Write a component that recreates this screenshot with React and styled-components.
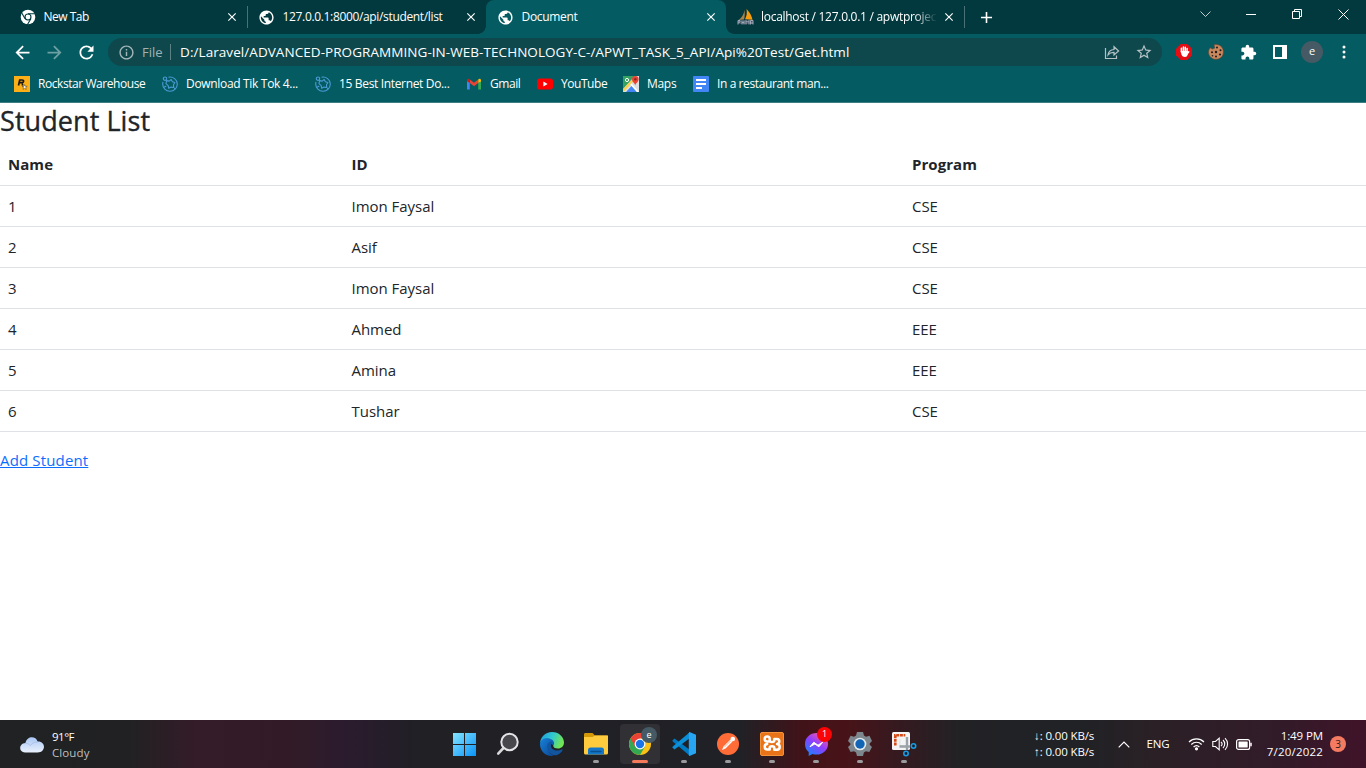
import React from "react";
import styled, { createGlobalStyle, css } from "styled-components";
import { MdPublic, MdExtension, MdRefresh, MdStarBorder, MdArrowBack, MdArrowForward, MdInfoOutline, MdClose, MdAdd } from "react-icons/md";

const Global = createGlobalStyle`
  * { box-sizing: border-box; }
  html, body, #root { height: 100%; }
  body { margin: 0; overflow: hidden; background: #fff; font-family: "Open Sans", "Noto Sans", sans-serif; }
  svg { display: block; flex: none; }
`;

const Screen = styled.div`
  width: 1366px;
  height: 768px;
  display: flex;
  flex-direction: column;
`;

const Label = styled.span`
  font-size: ${(p) => p.$size || 12}px;
  letter-spacing: ${(p) => p.$track || 0}px;
  color: ${(p) => p.$color || "#fff"};
  line-height: 16px;
  white-space: nowrap;
`;

/* Browser frame */
const TabStrip = styled.div`
  height: 34px;
  flex: none;
  display: flex;
  background: #02393e;
`;

const Tab = styled.div`
  width: ${(p) => p.$width}px;
  padding: 0 8.5px 0 ${(p) => p.$pad}px;
  display: flex;
  align-items: center;
  position: relative;
  color: #fff;
  ${(p) =>
    p.$active &&
    css`
      background: #045b61;
      border-radius: 8px 8px 0 0;
      &::before, &::after {
        content: "";
        position: absolute;
        bottom: 0;
        width: 8px;
        height: 8px;
      }
      &::before { left: -8px; background: radial-gradient(circle at 0 0, #02393e 7.5px, #045b61 8px); }
      &::after { right: -8px; background: radial-gradient(circle at 100% 0, #02393e 7.5px, #045b61 8px); }
    `}
  ${(p) =>
    p.$divider &&
    css`
      border-right: 1px solid transparent;
      border-image: linear-gradient(transparent 7px, #4a7276 7px, #4a7276 27px, transparent 27px) 1;
      border-width: 0 1px 0 0;
    `}
`;

const TabTitle = styled(Label)`
  flex: 1;
  min-width: 0;
  overflow: hidden;
  margin: 0 5px 0 7.5px;
  ${(p) => p.$fade && "mask-image: linear-gradient(to right, #000 87%, transparent);"}
`;

const NewTab = styled.div`
  width: 43px;
  display: grid;
  place-items: center;
  color: #fff;
`;

const WindowControls = styled.div`
  margin-left: auto;
  display: flex;
  height: 28px;
`;

const WindowButton = styled.div`
  width: 46px;
  display: grid;
  place-items: center;
`;

const Toolbar = styled.div`
  height: 36px;
  flex: none;
  display: flex;
  align-items: center;
  background: #045b61;
`;

const ToolButton = styled.div`
  width: 32px;
  display: grid;
  place-items: center;
  color: #fff;
  opacity: ${(p) => (p.$dim ? 0.42 : 1)};
`;

const NavGroup = styled.div`
  display: flex;
  padding-left: 6px;
  width: 108px;
`;

const AddressBar = styled.div`
  width: 1054px;
  height: 28px;
  border-radius: 14px;
  background: #0e484d;
  display: flex;
  align-items: center;
  padding: 0 2px 0 9.5px;
`;

const Scheme = styled(Label)`
  margin-left: 7.5px;
`;

const Separator = styled.div`
  width: 1px;
  height: 16px;
  margin: 0 9px 0 7.5px;
  background: #5c8185;
`;

const AddressActions = styled.div`
  margin-left: auto;
  display: flex;
`;

const Extensions = styled.div`
  display: flex;
  align-items: center;
  padding-left: 6px;
`;

const Avatar = styled.div`
  width: 22px;
  height: 22px;
  border-radius: 50%;
  background: #455a64;
  color: #fff;
  font-size: 11px;
  line-height: 20px;
  text-align: center;
`;

const Bookmarks = styled.div`
  height: 33px;
  flex: none;
  display: flex;
  padding: 0 0 5px 14px;
  background: #045b61;
  border-bottom: 1px solid #3b7f84;
`;

const Bookmark = styled.div`
  width: ${(p) => p.$width}px;
  display: flex;
  align-items: center;
  gap: 8px;
`;

/* Page */
const Page = styled.main`
  flex: 1;
  background: #fff;
  color: #212529;
`;

const Heading = styled.h1`
  margin: 0 0 6px;
  padding-top: 1px;
  font-size: 27px;
  font-weight: 500;
  line-height: 34px;
  letter-spacing: 0.07px;
  -webkit-text-stroke: 0.35px #212529;
`;

const Table = styled.table`
  width: 100%;
  table-layout: fixed;
  border-collapse: collapse;
  margin-bottom: 16px;
`;

const Cell = styled.td`
  width: ${(p) => p.$width || "auto"};
  height: 41px;
  padding: 0 8px;
  text-align: left;
  border-bottom: 1px solid #dee2e6;
  font-size: 15px;
  font-weight: ${(p) => (p.$head ? 700 : 400)};
  letter-spacing: ${(p) => (p.$head ? 0.05 : -0.03)}px;
  line-height: 24px;
`;

const AddLink = styled.a`
  color: #0d6efd;
  font-size: 15px;
  line-height: 24px;
  letter-spacing: 0.15px;
  text-decoration: underline;
`;

/* Taskbar */
const Taskbar = styled.footer`
  height: 48px;
  flex: none;
  display: flex;
  background: linear-gradient(90deg, #202223 0, #212123 130px, #341c28 195px, #321b27 290px, #2b1b2e 345px, #202025 420px, #202126 740px, #401319 800px, #481318 845px, #341a20 900px, #222225 960px, #202225 1080px, #2b2026 1160px, #321b29 1280px, #401329 1366px);
`;

const Weather = styled.div`
  width: 442px;
  display: flex;
  align-items: center;
  gap: 8px;
  padding: 1px 0 0 20px;
`;

const Stack = styled.div`
  display: flex;
  flex-direction: column;
  align-items: ${(p) => p.$align || "flex-start"};
`;

const Apps = styled.div`
  display: flex;
  align-items: center;
`;

const AppButton = styled.div`
  width: 40px;
  height: 40px;
  margin: 0 2px;
  border-radius: 4px;
  display: grid;
  place-items: center;
  position: relative;
  background: ${(p) => (p.$active ? "#303035" : "none")};
  ${(p) =>
    (p.$running || p.$active) &&
    css`
      &::after {
        content: "";
        position: absolute;
        bottom: 1px;
        left: 50%;
        transform: translateX(-50%);
        width: ${p.$active ? 16 : 6}px;
        height: 3px;
        border-radius: 2px;
        background: ${p.$active ? "#f5795b" : "#9b9a9c"};
      }
    `}
`;

const Badge = styled.span`
  position: absolute;
  top: ${(p) => p.$top}px;
  right: ${(p) => p.$right}px;
  width: ${(p) => p.$size}px;
  height: ${(p) => p.$size}px;
  border-radius: 50%;
  background: ${(p) => p.$bg};
  color: #fff;
  font-size: 9px;
  line-height: ${(p) => p.$size - 1}px;
  text-align: center;
`;

const Tray = styled.div`
  margin-left: auto;
  display: flex;
  align-items: center;
  padding-right: 20px;
`;

const TrayItem = styled.div`
  width: ${(p) => p.$width}px;
  display: flex;
  justify-content: ${(p) => p.$justify || "center"};
`;

const Notice = styled.div`
  width: 16px;
  height: 16px;
  margin-left: 7px;
  border-radius: 50%;
  background: #f47b61;
  color: #241b1d;
  font-size: 10px;
  line-height: 16px;
  text-align: center;
`;

const ChromeMono = () => (
  <svg width="16" height="16" viewBox="0 0 16 16">
    <circle cx="8" cy="8" r="7.3" fill="#fff" />
    <circle cx="8" cy="8" r="3.5" fill="#02393e" />
    <circle cx="8" cy="8" r="2.4" fill="#fff" />
    <path d="M8 4.7h7M5.1 9.700 1.500 3.500M10.900 9.700 7.300 15.800" stroke="#02393e" strokeWidth="1.100" />
  </svg>
);

const PhpMyAdmin = () => (
  <svg width="17" height="16" viewBox="0 0 17 16">
    <path d="M7.2 1C7.200 5 5 8.500 1.500 11L7 10.500C8 7 8 4 7.200 1Z" fill="#a8824f" />
    <path d="M9.500 0c3 3 5.400 7 6 10.800L8 10.200C9.800 7 10.200 4 9.500 0Z" fill="#f89c0e" />
    <path d="M1 11.300h15v3.700H1z" fill="#6c6f80" opacity=".55" />
    <path d="M1 15.500v-4h2v1.700H1M5 11.500v4m0-2h2M7 11.500v4m2 0v-4l1.500 1.700L12 11.500v4m1.500 0v-4H16v4m-2.500-1.500H16" stroke="#a3a6b8" fill="none" />
  </svg>
);

const Share = () => (
  <svg width="18" height="18" viewBox="0 0 18 18" fill="none" stroke="#b4c2c4" strokeWidth="1.2">
    <path d="M2.500 5v10.500h11v-3M5 12c.4-3.400 2.400-5.300 6-5.500V3.700L15.600 8 11 12V9.400C8.400 9.300 6.600 10 5 12Z" />
  </svg>
);

const Adblock = () => (
  <svg width="16" height="16" viewBox="0 0 16 16">
    <path d="M4.7 0h6.6L16 4.7v6.6L11.3 16H4.7L0 11.3V4.7Z" fill="#e40d13" />
    <path d="M5.400 8V4.300M7.400 7V2.900M9.300 7V3.200M11.100 8V4.400" stroke="#fff" strokeWidth="1.500" strokeLinecap="round" />
    <path d="M4.700 7h7.100v2.800c0 2-1.200 3.300-3 3.300-1.600 0-2.500-.7-3.200-2Z" fill="#fff" />
    <path d="m11 10 1.800-2.200" stroke="#fff" strokeWidth="1.400" strokeLinecap="round" />
  </svg>
);

const Cookie = () => (
  <svg width="16" height="16" viewBox="0 0 16 16">
    <path d="M6 .8 6.800 4 4.500 5.100 2 3.800C-.3 7 .1 11 3 13.500c4 3.500 10.500 1.800 12-3C16.900 4.400 12-.7 6 .8Z" fill="#c9875d" stroke="#6b4431" strokeWidth=".6" />
    <g fill="#211c1a"><circle cx="9" cy="3.600" r="1" /><circle cx="12.500" cy="6.200" r="1" /><circle cx="8" cy="8" r="1.200" /><circle cx="4" cy="8.200" r="1" /><circle cx="12" cy="10.500" r="1.100" /><circle cx="8" cy="12.500" r="1" /><circle cx="4.500" cy="11.700" r=".8" /></g>
  </svg>
);

const Rockstar = () => (
  <svg width="16" height="16" viewBox="0 0 16 16">
    <path d="M0 0h16v16H0z" fill="#fcaf17" />
    <path d="M4.500 9.500 5.700 4H8c2.300 0 2 2.600.1 2.600H5.800M8 7c1 .5.200 1.500.6 2.500" fill="none" stroke="#171717" strokeWidth="1.700" />
    <path d="m10.600 8.600.7 1.700 1.900.1-1.500 1.200.5 1.800-1.600-1-1.600 1 .5-1.800-1.500-1.200h1.900Z" fill="#fff" stroke="#3c3014" strokeWidth=".5" />
  </svg>
);

const Freemake = () => (
  <svg width="16" height="16" viewBox="0 0 16 16" fill="none" stroke="#4c9bd4" strokeWidth="1.100">
    <circle cx="3" cy="2.700" r="1.700" />
    <path d="M6.500 1.200C11 .2 15.300 3.600 15.300 8c0 4-3.200 7.300-7.300 7.300S.700 12 .700 8c0-.8.100-1.500.3-2.200" />
    <path d="m4.600 4.600 2.600.5L9.200 3.500l1.200 2.300 2.500.7-1.400 2.200.2 2.800-2.600-.4-2.400 1.200-.5-2.700L4 7.600Z" strokeLinejoin="round" />
    <path d="m1.500 11.500 2.800-1.600M12.300 12l1 1" />
  </svg>
);

const Gmail = () => (
  <svg width="16" height="16" viewBox="0 0 16 16">
    <path d="M1 4v9.500h2.800V6" fill="#4285f4" />
    <path d="M12.200 6v7.500H15V4" fill="#34a853" />
    <path d="M12.200 6.800V3.500c1.200-1.200 2.800-.7 2.800 1v1Z" fill="#fbbc04" />
    <path d="M3.800 3.500 8 6.700l4.200-3.200v3.600L8 10.300 3.800 7.100Z" fill="#ea4335" />
    <path d="M1 4.500c0-1.700 1.600-2.200 2.800-1v3.600L1 5.200Z" fill="#c5221f" />
  </svg>
);

const YouTube = () => (
  <svg width="16" height="16" viewBox="0 0 16 16">
    <rect y="2.400" width="16" height="11.200" rx="2.800" fill="#f00" />
    <path d="m6.400 5.600 4.200 2.400-4.200 2.400Z" fill="#fff" />
  </svg>
);

const Maps = () => (
  <svg width="16" height="16" viewBox="0 0 16 16">
    <path d="M0 0h16v16H0z" fill="#dce0e2" />
    <path d="M0 0h12L0 13Z" fill="#34a261" />
    <path d="m3 16 5.500-6 5.500 6Z" fill="#4285f4" />
    <path d="M0 15 11 3" stroke="#fbd04a" strokeWidth="2.200" />
    <path d="m8 8 7 8" stroke="#fff" strokeWidth="1.500" />
    <circle cx="4" cy="4" r="1.600" fill="none" stroke="#fff" />
    <path d="M12.300 9.500C11.800 7 9 6 9 3.300a3.300 3.300 0 0 1 6.600 0c0 2.700-2.800 3.700-3.300 6.200Z" fill="#ea4335" />
    <circle cx="12.300" cy="3.300" r="1.200" fill="#8c2b24" />
  </svg>
);

const Docs = () => (
  <svg width="16" height="16" viewBox="0 0 16 16">
    <rect width="16" height="16" rx="1" fill="#4285f4" />
    <path d="M3 4h10M3 8h10M3 12h6" stroke="#fff" strokeWidth="1.900" />
  </svg>
);

const Cloud = () => (
  <svg width="24" height="16" viewBox="0 0 24 16">
    <defs><linearGradient id="cloud" x2="0" y2="1"><stop stopColor="#a9c6f5" /><stop offset="1" stopColor="#e9f1fc" /></linearGradient></defs>
    <path d="M5 15.500C-1.500 15.500-1.500 6.500 5.400 6 7-1.500 16-1.500 17.600 4.500c8.500-.5 8.500 11 0 11Z" fill="url(#cloud)" />
    <path d="M5.400 6.500c2.500-.2 4 .8 5 2.200 1.400-2.500 4-3.900 7.200-3.700" fill="none" stroke="#a6bde3" strokeWidth=".8" />
  </svg>
);

const Windows = () => (
  <svg width="23" height="23" viewBox="0 0 23 23">
    <defs><linearGradient id="win" gradientUnits="userSpaceOnUse" x2="23" y2="23"><stop stopColor="#85e3ff" /><stop offset="1" stopColor="#0a93f8" /></linearGradient></defs>
    <path d="M0 0h11v11H0zM12 0h11v11H12zM0 12h11v11H0zM12 12h11v11H12z" fill="url(#win)" />
  </svg>
);

const Search = () => (
  <svg width="24" height="24" viewBox="0 0 24 24">
    <path d="m7.500 16-5.300 5.600" stroke="#d8d8da" strokeWidth="2.600" strokeLinecap="round" />
    <circle cx="13.500" cy="10" r="8.200" fill="#47474c" stroke="#e4e4e6" strokeWidth="2" />
  </svg>
);

const Edge = () => (
  <svg width="24" height="24" viewBox="0 0 24 24">
    <defs>
      <linearGradient id="edgeTop" x2="1" y2=".3"><stop stopColor="#1a9be0" /><stop offset=".55" stopColor="#31c8cf" /><stop offset="1" stopColor="#70e356" /></linearGradient>
      <linearGradient id="edgeLow" x2="1" y2="1"><stop stopColor="#1782d8" /><stop offset="1" stopColor="#0b4596" /></linearGradient>
    </defs>
    <path d="M0 12C0 5 5.200 0 12 0s12 5 12 10.500c0 3.700-2.700 6-6 6-3.200 0-5-1.200-4.700-3C10 5 1 6 0 12Z" fill="url(#edgeTop)" />
    <path d="M0 12C.5 6 8 4.500 12.500 8c2 2 2 3.800.8 5.500-1-2-4-2-5 0-1.500 4 2 9.500 6 10C7 25.500 0 20 0 12Z" fill="url(#edgeLow)" />
    <path d="M11.500 9.300c-4.300 1.200-5.500 5-3.500 9 2.200 4.500 6.500 6 9.500 4.500 2.300-1.200 4-2.600 5-4.600.4-.8-.3-1-.8-.700-4.700 2.200-10.500.5-10.700-3.500-.1-2 .5-2.500 1.500-3.500Z" fill="#12559f" />
  </svg>
);

const Folder = () => (
  <svg width="24" height="24" viewBox="0 0 24 24">
    <path d="M0 2.500C0 1.500.6 1 1.500 1h7L11 3.500h13V12H0Z" fill="#d59908" />
    <path d="M0 5h8.500L11 3.500h12q1 0 1 1V21q0 1.500-1.500 1.500h-21Q0 22.500 0 21Z" fill="#fecb3e" />
    <path d="M4 22.500V18q0-2.500 2.500-2.500h11q2.500 0 2.500 2.500v4.500Z" fill="#1376c8" />
    <path d="M7 19.500h10" stroke="#084f91" strokeWidth="1.400" strokeLinecap="round" />
  </svg>
);

const Chrome = () => (
  <svg width="22" height="22" viewBox="0 0 22 22">
    <circle cx="11" cy="11" r="11" fill="#fbc116" />
    <path d="M1.500 5.500A11 11 0 0 0 11 22l4.800-8.300L11 11Z" fill="#34a853" />
    <path d="M1.500 5.500a11 11 0 0 1 19 0H11v5.500L6.200 13.700Z" fill="#ea4335" />
    <circle cx="11" cy="11" r="5.400" fill="#fff" />
    <circle cx="11" cy="11" r="4.200" fill="#1a73e8" />
  </svg>
);

const VsCode = () => (
  <svg width="24" height="24" viewBox="0 0 24 24">
    <path d="M.6 8.200 2.500 6.500 18 18v6L.8 9.600Q0 8.900.6 8.200Z" fill="#0079c3" />
    <path d="M.6 15.800 2.500 17.500 18 6V0L.8 14.400Q0 15.100.6 15.800Z" fill="#0a8fd8" />
    <path d="m17.500 0 6.500 2.800v18.400L17.500 24q-.7-.4-.7-1.200V1.200q0-.8.700-1.200Z" fill="#28a5f2" />
  </svg>
);

const Postman = () => (
  <svg width="22" height="22" viewBox="0 0 22 22">
    <circle cx="11" cy="11" r="11" fill="#ff6c37" />
    <path d="m5 17 1.500-3.500 7-7L15.500 8.500l-7 7Z" fill="#fff" />
    <circle cx="15.800" cy="6" r="2.300" fill="#fff" />
    <path d="m7.500 14 6.200-6.200" stroke="#ef986f" strokeWidth=".8" />
  </svg>
);

const Xampp = () => (
  <svg width="24" height="24" viewBox="0 0 24 24">
    <rect x=".5" y=".5" width="23" height="23" rx="1.500" fill="#e87318" stroke="#f49239" />
    <path d="M9.500 9.500H7.200A2.500 2.500 0 1 1 9.700 7v1.500q0 1.500 2.300 1.500t2.300-1.500V7H17q2.300 0 2.300 2.300T17 12q2.700.4 2.700 3T17 17.700h-2.700v-2q0-1.500-2.300-1.500t-2.300 1.500v1.800H7.200q-2.500 0-2.500-2.700T7.200 12" fill="none" stroke="#fff" strokeWidth="2.500" strokeLinejoin="round" strokeLinecap="round" />
  </svg>
);

const Messenger = () => (
  <svg width="23" height="23" viewBox="0 0 23 23">
    <defs><linearGradient id="msg" x1=".1" y1="1" x2=".8" y2="0"><stop stopColor="#098cff" /><stop offset=".55" stopColor="#913dff" /><stop offset="1" stopColor="#ff5c94" /></linearGradient></defs>
    <path d="M11.500 0C5 0 0 4.700 0 11c0 3.500 1.400 6.200 3.700 8V23l3.700-2c1.300.4 2.700.6 4.100.6C18 21.600 23 17 23 11S18 0 11.500 0Z" fill="url(#msg)" />
    <path d="m5 13.700 3.800-4.500 4.200 3 4.700-3-3.800 4.600-4-2.800Z" fill="#fff" stroke="#fff" strokeLinejoin="round" />
  </svg>
);

const Gear = () => (
  <svg width="24" height="24" viewBox="0 0 24 24">
    <path d="M9 0h6l1 3.500 2 1.200 3.500-.9L24 9l-2.300 2.400v1.400L24 15l-2.700 5-3.400-.8-2 1.200L15 24H9l-1-3.600-2-1.200-3.400.8L0 15l2.400-2.200v-1.400L0 9l2.600-5.200 3.400.9 2-1.200Z" fill="#7c868c" />
    <circle cx="12" cy="12" r="6.300" fill="#e4e9ec" />
    <circle cx="12" cy="12" r="4.700" fill="#1265b4" />
  </svg>
);

const Snip = () => (
  <svg width="26" height="25" viewBox="0 0 26 25">
    <rect x="1" width="18" height="18" rx="1.500" fill="#f4f4f5" />
    <path d="M4.300 13.500V3.300h10" fill="none" stroke="#d64a18" strokeWidth="2.600" strokeDasharray="3 .7" />
    <path d="M9 7v7h6" stroke="#dfe2e5" strokeWidth="1" fill="none" />
    <path d="M8.500 14.500H19M16 5v13" stroke="#9aa2a8" strokeWidth="2.400" />
    <circle cx="22.500" cy="14" r="2.200" fill="#12202e" stroke="#199be2" strokeWidth="1.600" />
    <circle cx="15" cy="21.500" r="2.200" fill="#12202e" stroke="#199be2" strokeWidth="1.600" />
  </svg>
);

const Wifi = () => (
  <svg width="17" height="14" viewBox="0 0 17 14" fill="none" stroke="#fff" strokeWidth="1.200">
    <path d="M1 5c4.200-4.200 10.800-4.200 15 0M3.300 7.500c3-3 7.400-3 10.400 0M5.600 10c1.700-1.700 4.100-1.700 5.800 0" />
    <circle cx="8.500" cy="11.800" r="1" fill="#fff" />
  </svg>
);

const Volume = () => (
  <svg width="17" height="14" viewBox="0 0 17 14" fill="none" stroke="#fff" strokeWidth="1.100">
    <path d="M.8 4.500h2.700L7.200 1.200v11.600L3.500 9.500H.8ZM9 4.800c1.200 1.200 1.200 3.200 0 4.400M11 3c2.300 2.200 2.300 5.800 0 8M13 1.200c3.400 3.200 3.400 8.400 0 11.600" />
  </svg>
);

const Battery = () => (
  <svg width="16" height="11" viewBox="0 0 16 11">
    <rect x=".6" y=".6" width="13" height="9.800" rx="2" fill="none" stroke="#fff" strokeWidth="1.200" />
    <rect x="2.500" y="2.500" width="9.200" height="6" rx=".5" fill="#fff" />
    <path d="M15 3.800v3.400" stroke="#fff" strokeWidth="1.500" />
  </svg>
);

const tabs = [
  { icon: <ChromeMono />, title: "New Tab", width: 248, pad: 20, divider: true, track: -0.5 },
  { icon: <MdPublic size={17} />, title: "127.0.0.1:8000/api/student/list", width: 238, pad: 10, track: -0.34 },
  { icon: <MdPublic size={17} />, title: "Document", width: 240, pad: 11, active: true, track: -0.32 },
  { icon: <PhpMyAdmin />, title: "localhost / 127.0.0.1 / apwtproject", width: 239, pad: 10.5, divider: true, fade: true, track: -0.28 },
];

const bookmarks = [
  { icon: <Rockstar />, title: "Rockstar Warehouse", width: 148, track: -0.44 },
  { icon: <Freemake />, title: "Download Tik Tok 4...", width: 153, track: -0.32 },
  { icon: <Freemake />, title: "15 Best Internet Do...", width: 151, track: -0.34 },
  { icon: <Gmail />, title: "Gmail", width: 71, track: -0.45 },
  { icon: <YouTube />, title: "YouTube", width: 86, track: -0.45 },
  { icon: <Maps />, title: "Maps", width: 70, track: -0.3 },
  { icon: <Docs />, title: "In a restaurant man...", width: 150, track: -0.4 },
];

const students = [
  ["1", "Imon Faysal", "CSE"],
  ["2", "Asif", "CSE"],
  ["3", "Imon Faysal", "CSE"],
  ["4", "Ahmed", "EEE"],
  ["5", "Amina", "EEE"],
  ["6", "Tushar", "CSE"],
];

const BrowserTabs = () => (
  <TabStrip>
    {tabs.map((t) => (
      <Tab key={t.title} $width={t.width} $pad={t.pad} $active={t.active} $divider={t.divider}>
        {t.icon}
        <TabTitle $track={t.track} $fade={t.fade}>{t.title}</TabTitle>
        <MdClose size={14} />
      </Tab>
    ))}
    <NewTab><MdAdd size={19} /></NewTab>
    <WindowControls>
      <WindowButton><svg width="11" height="7" fill="none" stroke="#c0cecf"><path d="m.5.500 5 5 5-5" /></svg></WindowButton>
      <WindowButton><svg width="10" height="1"><path d="M0 0h10v1H0z" fill="#fff" /></svg></WindowButton>
      <WindowButton><svg width="10" height="10" fill="none" stroke="#fff"><path d="M.5 2.500h7v7h-7zM2.500 2V.5h7v7H8" /></svg></WindowButton>
      <WindowButton><svg width="11" height="11" stroke="#fff"><path d="m.5.500 10 10m0-10-10 10" /></svg></WindowButton>
    </WindowControls>
  </TabStrip>
);

const BrowserToolbar = () => (
  <Toolbar>
    <NavGroup>
      <ToolButton><MdArrowBack size={21} /></ToolButton>
      <ToolButton $dim><MdArrowForward size={21} /></ToolButton>
      <ToolButton><MdRefresh size={21} /></ToolButton>
    </NavGroup>
    <AddressBar>
      <MdInfoOutline size={17} color="#a6b7b9" />
      <Scheme $size={13} $color="#9fb3b5">File</Scheme>
      <Separator />
      <Label $size={13.5} $track={0.06}>D:/Laravel/ADVANCED-PROGRAMMING-IN-WEB-TECHNOLOGY-C-/APWT_TASK_5_API/Api%20Test/Get.html</Label>
      <AddressActions>
        <ToolButton><Share /></ToolButton>
        <ToolButton><MdStarBorder size={18} color="#b4c2c4" /></ToolButton>
      </AddressActions>
    </AddressBar>
    <Extensions>
      <ToolButton><Adblock /></ToolButton>
      <ToolButton><Cookie /></ToolButton>
      <ToolButton><MdExtension size={17} /></ToolButton>
      <ToolButton><svg width="14" height="14"><path fillRule="evenodd" d="M0 0h14v14H0zM2 2v10h7V2z" fill="#fff" /></svg></ToolButton>
      <ToolButton><Avatar>e</Avatar></ToolButton>
      <ToolButton><svg width="4" height="14" fill="#fff"><circle cx="2" cy="2" r="1.500" /><circle cx="2" cy="7" r="1.500" /><circle cx="2" cy="12" r="1.500" /></svg></ToolButton>
    </Extensions>
  </Toolbar>
);

export default function App() {
  return (
    <Screen>
      <Global />
      <BrowserTabs />
      <BrowserToolbar />
      <Bookmarks>
        {bookmarks.map((b) => (
          <Bookmark key={b.title} $width={b.width}>
            {b.icon}
            <Label $track={b.track}>{b.title}</Label>
          </Bookmark>
        ))}
      </Bookmarks>
      <Page>
        <Heading>Student List</Heading>
        <Table>
          <thead>
            <tr>
              <Cell as="th" $head $width="343.5px">Name</Cell>
              <Cell as="th" $head $width="560.5px">ID</Cell>
              <Cell as="th" $head>Program</Cell>
            </tr>
          </thead>
          <tbody>
            {students.map((row) => (
              <tr key={row[0]}>{row.map((v, i) => <Cell key={i}>{v}</Cell>)}</tr>
            ))}
          </tbody>
        </Table>
        <AddLink>Add Student</AddLink>
      </Page>
      <Taskbar>
        <Weather>
          <Cloud />
          <Stack>
            <Label $size={11.5} $track={-0.5}>91°F</Label>
            <Label $size={11.5} $color="#bfbfc0" $track={0.1}>Cloudy</Label>
          </Stack>
        </Weather>
        <Apps>
          <AppButton><Windows /></AppButton>
          <AppButton><Search /></AppButton>
          <AppButton><Edge /></AppButton>
          <AppButton $running><Folder /></AppButton>
          <AppButton $active><Chrome /><Badge $top={3} $right={3} $size={16} $bg="#455a64">e</Badge></AppButton>
          <AppButton $running><VsCode /></AppButton>
          <AppButton $running><Postman /></AppButton>
          <AppButton $running><Xampp /></AppButton>
          <AppButton $running><Messenger /><Badge $top={3} $right={4} $size={15} $bg="#fa0505">1</Badge></AppButton>
          <AppButton $running><Gear /></AppButton>
          <AppButton $running><Snip /></AppButton>
        </Apps>
        <Tray>
          <TrayItem $width={78} $justify="flex-start">
            <Stack>
              <Label $size={11.5} $track={-0.12}>↓: 0.00 KB/s</Label>
              <Label $size={11.5} $track={-0.12}>↑: 0.00 KB/s</Label>
            </Stack>
          </TrayItem>
          <TrayItem $width={24}><svg width="12" height="7" fill="none" stroke="#fff" strokeWidth="1.200"><path d="m.7 6.300 5.300-5.300 5.300 5.300" /></svg></TrayItem>
          <TrayItem $width={44}><Label $size={11.5} $track={-0.1}>ENG</Label></TrayItem>
          <TrayItem $width={32}><Wifi /></TrayItem>
          <TrayItem $width={16}><Volume /></TrayItem>
          <TrayItem $width={32}><Battery /></TrayItem>
          <TrayItem $width={63} $justify="flex-end">
            <Stack $align="flex-end">
              <Label $size={11.5} $track={-0.1}>1:49 PM</Label>
              <Label $size={11.5} $track={0.2}>7/20/2022</Label>
            </Stack>
          </TrayItem>
          <Notice>3</Notice>
        </Tray>
      </Taskbar>
    </Screen>
  );
}
